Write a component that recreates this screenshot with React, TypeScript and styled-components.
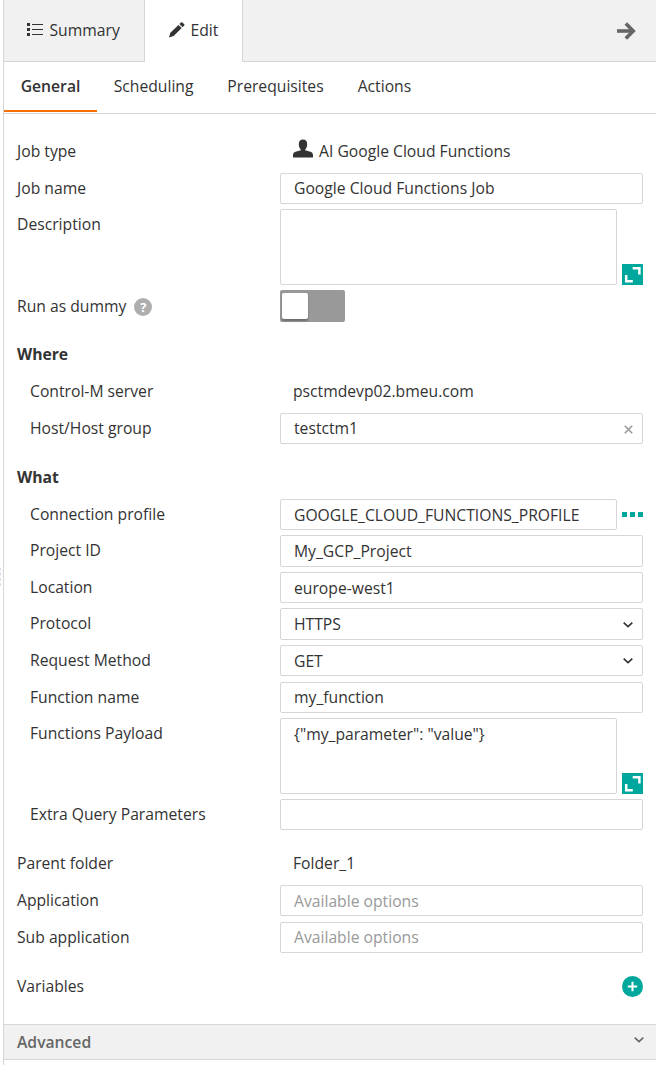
import React from "react";
import styled, { createGlobalStyle, css } from "styled-components";

const GlobalStyle = createGlobalStyle`
  *, *::before, *::after { box-sizing: border-box; }
  body {
    margin: 0;
    background: #fff;
    color: #333;
    font-family: "Open Sans", sans-serif;
    font-size: 15.7px;
  }
  svg { display: block; flex: none; }
`;

const LINE = "#d6d6d6";
const TEAL = "#00a79d";

const Page = styled.div`
  display: flex;
  width: 656px;
  height: 1065px;
  overflow: hidden;
`;

const Splitter = styled.div`
  display: flex;
  align-items: center;
  width: 3px;
  padding-top: 88px;
`;

const Panel = styled.main`
  flex: 1;
  min-width: 0;
  border-left: 1px solid ${LINE};
`;

const TopBar = styled.header`
  display: flex;
  height: 62px;
`;

const TopTab = styled.div<{ $active?: boolean; $width: number }>`
  display: flex;
  align-items: center;
  width: ${(p) => p.$width}px;
  height: 62px;
  padding: 0 0 1px ${(p) => (p.$active ? 24 : 23)}px;
  border-right: 1px solid ${LINE};
  border-bottom: 1px solid ${(p) => (p.$active ? "#fff" : LINE)};
  background: ${(p) => (p.$active ? "#fff" : "#f1f1f1")};
`;

const TabText = styled.span`
  margin-left: 5.5px;
`;

const TopFill = styled.div`
  display: flex;
  flex: 1;
  align-items: center;
  justify-content: flex-end;
  padding-right: 20px;
  border-bottom: 1px solid ${LINE};
  background: #f1f1f1;
`;

const SubTabs = styled.nav`
  display: flex;
  height: 52px;
  border-bottom: 1px solid ${LINE};
`;

const SubTab = styled.div<{ $active?: boolean; $width: number }>`
  width: ${(p) => p.$width}px;
  height: 50px;
  padding-left: 16.7px;
  line-height: 48px;
  white-space: nowrap;
  ${(p) =>
    p.$active &&
    css`
      border-bottom: 2px solid #f86e00;
      font-weight: 600;
    `}
`;

const Form = styled.section`
  padding: 22px 13px 0 13px;
`;

const Row = styled.div<{ $h: number; $indent?: boolean }>`
  display: flex;
  align-items: flex-start;
  height: ${(p) => p.$h}px;
  padding-left: ${(p) => (p.$indent ? 13 : 0)}px;
`;

const Label = styled.div<{ $indent?: boolean; $down?: boolean }>`
  display: flex;
  align-items: center;
  gap: 8px;
  flex: none;
  width: ${(p) => (p.$indent ? 250 : 263)}px;
  padding-top: ${(p) => (p.$down ? 1 : 0)}px;
  line-height: 31px;
  white-space: nowrap;
`;

const SectionTitle = styled.h2`
  height: 38px;
  margin: 0;
  padding-top: 1px;
  font-size: 15.7px;
  font-weight: 700;
  line-height: 31px;
`;

const Value = styled.div`
  display: flex;
  gap: 6px;
  padding-left: 13px;
  line-height: 31px;
  white-space: nowrap;
`;

const Field = styled.div<{ $h?: number; $low?: boolean; $muted?: boolean }>`
  display: flex;
  flex: 1;
  align-items: flex-start;
  justify-content: space-between;
  min-width: 0;
  height: ${(p) => p.$h ?? 31}px;
  padding: ${(p) => (p.$low ? 1 : 0)}px 9px 0 13px;
  border: 1px solid ${LINE};
  border-radius: 2px;
  color: ${(p) => (p.$muted ? "#999" : "#333")};
  line-height: 29px;
  white-space: nowrap;
`;

const FieldIcon = styled.span<{ $top: number }>`
  display: flex;
  padding-top: ${(p) => p.$top}px;
`;

const SideAction = styled.div<{ $h: number; $center?: boolean }>`
  display: flex;
  flex: none;
  align-items: ${(p) => (p.$center ? "center" : "flex-end")};
  justify-content: flex-end;
  width: 26px;
  height: ${(p) => p.$h}px;
`;

const Help = styled.span`
  display: flex;
  align-items: center;
  justify-content: center;
  width: 18px;
  height: 18px;
  border-radius: 50%;
  background: #aeaeae;
  color: #fff;
  font-size: 13px;
  font-weight: 700;
  line-height: 18px;
`;

const Toggle = styled.div`
  width: 65px;
  height: 32px;
  padding: 3px 2px;
  border-radius: 2px;
  background: #999;
`;

const Knob = styled.div`
  width: 26px;
  height: 26px;
  border-radius: 2px;
  background: #fff;
  box-shadow: 0 2px 2px rgba(0, 0, 0, 0.3);
`;

const Spacer = styled.div`
  flex: 1;
`;

const Advanced = styled.footer`
  display: flex;
  justify-content: space-between;
  height: 36px;
  padding: 0 12px 0 13px;
  border-top: 1px solid ${LINE};
  border-bottom: 1px solid ${LINE};
  background: #f1f1f1;
  color: #666;
  font-weight: 600;
  line-height: 34px;
`;

const ListIcon = () => (
  <svg width="17" height="14" viewBox="0 0 17 14">
    <path d="M0 0h3v3H0zM0 5h3v3H0zM0 10h3v3H0z" fill="#333" />
    <path d="M5 1.500h11M5 6.500h11M5 11.500h11" stroke="#333" strokeWidth="1" />
  </svg>
);

const PencilIcon = () => (
  <svg width="16" height="16" viewBox="0 0 16 16" fill="#333">
    <path d="M0 15.400 1.400 10.800 9.500 2.900 12.700 6 4.600 13.900z" />
    <path d="M10.400 2 12 .500q.7-.6 1.400 0l1.800 1.800q.6.700 0 1.300L13.600 5.200z" />
  </svg>
);

const ArrowIcon = () => (
  <svg width="19" height="18" viewBox="0 0 19 18">
    <path d="M0 9h15.500" stroke="#666" strokeWidth="3.600" />
    <path d="M8.800 1.600 16.200 9l-7.400 7.400" fill="none" stroke="#666" strokeWidth="3.600" />
  </svg>
);

const PersonIcon = () => (
  <svg width="20" height="19" viewBox="0 0 20 19" fill="#333">
    <path d="M10 .5c2.900 0 4.200 2 4.200 4.700 0 2.200-.7 4.100-2 5.300v.8l5.200 1.400c1.800.5 2.600 1.700 2.600 3.300v2.500H0V16c0-1.600.8-2.800 2.600-3.300l5.200-1.400v-.8c-1.300-1.200-2-3.100-2-5.300C5.800 2.500 7.100.5 10 .5z" />
  </svg>
);

const ExpandIcon = () => (
  <svg width="21" height="21" viewBox="0 0 21 21">
    <path d="M0 0h21v21H0z" fill={TEAL} />
    <path d="M10.700 4.200h6.700v6.400M4.200 11v6.200h6.600" fill="none" stroke="#fff" strokeWidth="2.500" />
  </svg>
);

const DotsIcon = () => (
  <svg width="21" height="5" viewBox="0 0 21 5" fill={TEAL}>
    <path d="M0 0h5v5H0zM8 0h5v5H8zM16 0h5v5h-5z" />
  </svg>
);

const PlusIcon = () => (
  <svg width="21" height="21" viewBox="0 0 21 21">
    <circle cx="10.500" cy="10.500" r="10.500" fill={TEAL} />
    <path d="M10.500 5.800v9.400M5.800 10.500h9.400" stroke="#fff" strokeWidth="2" />
  </svg>
);

const ClearIcon = () => (
  <svg width="9" height="9" viewBox="0 0 9 9">
    <path d="M.8.800l7.400 7.400M8.200.800.800 8.200" stroke="#999" strokeWidth="1.600" />
  </svg>
);

const ChevronIcon = ({ color = "#333" }: { color?: string }) => (
  <svg width="10" height="6" viewBox="0 0 10 6">
    <path d="M.7.700 5 4.700 9.300.700" fill="none" stroke={color} strokeWidth="1.600" />
  </svg>
);

const GripIcon = () => (
  <svg width="2" height="19" viewBox="0 0 2 19">
    <path d="M0 2h1M0 7h1M0 12.500h1M0 17.500h1" stroke="#d3dbe8" strokeWidth="2.500" />
  </svg>
);

type FieldRowProps = {
  label: string;
  text?: string;
  h: number;
  indent?: boolean;
  fieldH?: number;
  low?: boolean;
  muted?: boolean;
  icon?: React.ReactNode;
  iconTop?: number;
  action?: React.ReactNode;
  centerAction?: boolean;
};

const FieldRow = (p: FieldRowProps) => (
  <Row $h={p.h} $indent={p.indent}>
    <Label $indent={p.indent}>{p.label}</Label>
    <Field $h={p.fieldH} $low={p.low} $muted={p.muted}>
      <span>{p.text}</span>
      {p.icon && <FieldIcon $top={p.iconTop ?? 12}>{p.icon}</FieldIcon>}
    </Field>
    {p.action && (
      <SideAction $h={p.fieldH ?? 31} $center={p.centerAction}>
        {p.action}
      </SideAction>
    )}
  </Row>
);

export default function App() {
  return (
    <>
      <GlobalStyle />
      <Page>
        <Splitter>
          <GripIcon />
        </Splitter>
        <Panel>
          <TopBar>
            <TopTab $width={141}>
              <ListIcon />
              <TabText>Summary</TabText>
            </TopTab>
            <TopTab $width={98} $active>
              <PencilIcon />
              <TabText>Edit</TabText>
            </TopTab>
            <TopFill>
              <ArrowIcon />
            </TopFill>
          </TopBar>
          <SubTabs>
            <SubTab $width={93} $active>General</SubTab>
            <SubTab $width={113.6}>Scheduling</SubTab>
            <SubTab $width={130.4}>Prerequisites</SubTab>
            <SubTab $width={88}>Actions</SubTab>
          </SubTabs>
          <Form>
            <Row $h={37}>
              <Label>Job type</Label>
              <Value>
                <FieldIcon $top={3}>
                  <PersonIcon />
                </FieldIcon>
                <span>AI Google Cloud Functions</span>
              </Value>
            </Row>
            <FieldRow label="Job name" text="Google Cloud Functions Job" h={36} />
            <FieldRow label="Description" h={81} fieldH={76} action={<ExpandIcon />} />
            <Row $h={48}>
              <Label $down>
                Run as dummy <Help>?</Help>
              </Label>
              <Toggle>
                <Knob />
              </Toggle>
            </Row>
            <SectionTitle>Where</SectionTitle>
            <Row $h={37} $indent>
              <Label $indent>Control-M server</Label>
              <Value>psctmdevp02.bmeu.com</Value>
            </Row>
            <FieldRow indent label="Host/Host group" text="testctm1" h={48} icon={<ClearIcon />} iconTop={11} />
            <SectionTitle>What</SectionTitle>
            <FieldRow indent low label="Connection profile" text="GOOGLE_CLOUD_FUNCTIONS_PROFILE" h={36} action={<DotsIcon />} centerAction />
            <FieldRow indent low label="Project ID" text="My_GCP_Project" h={37} fieldH={32} />
            <FieldRow indent low label="Location" text="europe-west1" h={36} />
            <FieldRow indent low label="Protocol" text="HTTPS" h={37} fieldH={32} icon={<ChevronIcon />} />
            <FieldRow indent low label="Request Method" text="GET" h={37} icon={<ChevronIcon />} iconTop={11} />
            <FieldRow indent label="Function name" text="my_function" h={36} />
            <FieldRow indent low label="Functions Payload" text={'{"my_parameter": "value"}'} h={81} fieldH={76} action={<ExpandIcon />} />
            <FieldRow indent label="Extra Query Parameters" h={49} />
            <Row $h={37}>
              <Label>Parent folder</Label>
              <Value>Folder_1</Value>
            </Row>
            <FieldRow low muted label="Application" text="Available options" h={37} />
            <FieldRow muted label="Sub application" text="Available options" h={49} />
            <Row $h={53}>
              <Label>Variables</Label>
              <Spacer />
              <SideAction $h={26}>
                <PlusIcon />
              </SideAction>
            </Row>
          </Form>
          <Advanced>
            <span>Advanced</span>
            <FieldIcon $top={12}>
              <ChevronIcon color="#666" />
            </FieldIcon>
          </Advanced>
        </Panel>
      </Page>
    </>
  );
}
